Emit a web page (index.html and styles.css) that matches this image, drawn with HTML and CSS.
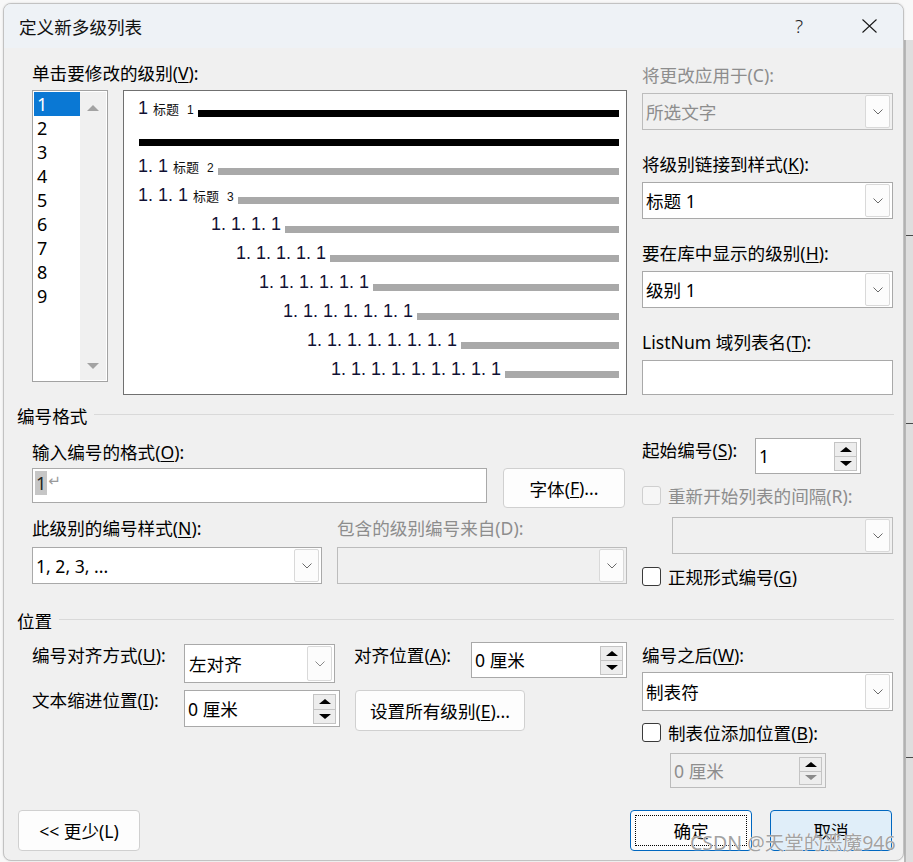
FILE: index.html
```html
<!DOCTYPE html>
<html lang="zh-CN">
<head>
<meta charset="utf-8">
<title>定义新多级列表</title>
<link rel="stylesheet" href="styles.css">
</head>
<body>
<div class="screen">
  <div class="window">
    <div class="titlebar">
      <span class="title">定义新多级列表</span>
      <span class="tb-help">?</span>
      <span class="tb-close"><svg width="15" height="14" viewBox="0 0 15 14"><path d="M0.5 0.5 L14.5 13.5 M14.5 0.5 L0.5 13.5" stroke="#1a1a1a" stroke-width="1.1" fill="none"/></svg></span>
    </div>

    <div class="content">
      <!-- Section A -->
      <div class="sec sec-a">
        <div class="col-left">
          <div class="label">单击要修改的级别(<u>V</u>):</div>
          <div class="level-row">
            <div class="levels">
              <div class="level-items">
                <div class="lv sel">1</div>
                <div class="lv">2</div>
                <div class="lv">3</div>
                <div class="lv">4</div>
                <div class="lv">5</div>
                <div class="lv">6</div>
                <div class="lv">7</div>
                <div class="lv">8</div>
                <div class="lv">9</div>
              </div>
              <div class="vscroll">
                <span class="arr-up"></span>
                <span class="arr-down"></span>
              </div>
            </div>
            <div class="preview">
              <div class="prow first"><span class="pn">1</span><span class="ps">标题<span class="psn">1</span></span><span class="bar black"></span></div>
              <div class="prow"><span class="bar black nogap"></span></div>
              <div class="prow"><span class="pn">1. 1</span><span class="ps">标题<span class="psn">2</span></span><span class="bar"></span></div>
              <div class="prow"><span class="pn">1. 1. 1</span><span class="ps">标题<span class="psn">3</span></span><span class="bar"></span></div>
              <div class="prow l5"><span class="pn">1. 1. 1. 1</span><span class="bar"></span></div>
              <div class="prow l6"><span class="pn">1. 1. 1. 1. 1</span><span class="bar"></span></div>
              <div class="prow l7"><span class="pn">1. 1. 1. 1. 1. 1</span><span class="bar"></span></div>
              <div class="prow l8"><span class="pn">1. 1. 1. 1. 1. 1. 1</span><span class="bar"></span></div>
              <div class="prow l9"><span class="pn">1. 1. 1. 1. 1. 1. 1. 1</span><span class="bar"></span></div>
              <div class="prow l10"><span class="pn">1. 1. 1. 1. 1. 1. 1. 1. 1</span><span class="bar"></span></div>
            </div>
          </div>
        </div>
        <div class="col-right stack-a">
          <div class="field">
            <div class="label dis">将更改应用于(C):</div>
            <div class="combo disabled"><span class="val">所选文字</span><span class="dd"><svg width="10" height="6" viewBox="0 0 10 6"><path d="M0.5 0.5 L5 5 L9.5 0.5" stroke="#6a6a6a" fill="none"/></svg></span></div>
          </div>
          <div class="field">
            <div class="label">将级别链接到样式(<u>K</u>):</div>
            <div class="combo"><span class="val">标题 1</span><span class="dd"><svg width="10" height="6" viewBox="0 0 10 6"><path d="M0.5 0.5 L5 5 L9.5 0.5" stroke="#6a6a6a" fill="none"/></svg></span></div>
          </div>
          <div class="field">
            <div class="label">要在库中显示的级别(<u>H</u>):</div>
            <div class="combo"><span class="val">级别 1</span><span class="dd"><svg width="10" height="6" viewBox="0 0 10 6"><path d="M0.5 0.5 L5 5 L9.5 0.5" stroke="#6a6a6a" fill="none"/></svg></span></div>
          </div>
          <div class="field">
            <div class="label">ListNum 域列表名(<u>T</u>):</div>
            <div class="textbox"></div>
          </div>
        </div>
      </div>

      <!-- Section B -->
      <div class="sechead head-b"><span>编号格式</span><span class="line"></span></div>
      <div class="sec sec-b">
        <div class="col-left pad-b">
          <div class="label">输入编号的格式(<u>O</u>):</div>
          <div class="fmt-row">
            <div class="textbox fmt"><span class="hl">1</span><span class="ret">↵</span></div>
            <div class="btn font-btn">字体(<u>F</u>)...</div>
          </div>
          <div class="pair">
            <div class="label">此级别的编号样式(<u>N</u>):</div>
            <div class="label dis">包含的级别编号来自(D):</div>
            <div class="combo"><span class="val">1, 2, 3, ...</span><span class="dd"><svg width="10" height="6" viewBox="0 0 10 6"><path d="M0.5 0.5 L5 5 L9.5 0.5" stroke="#6a6a6a" fill="none"/></svg></span></div>
            <div class="combo disabled"><span class="val"></span><span class="dd"><svg width="10" height="6" viewBox="0 0 10 6"><path d="M0.5 0.5 L5 5 L9.5 0.5" stroke="#6a6a6a" fill="none"/></svg></span></div>
          </div>
        </div>
        <div class="col-right">
          <div class="start-row">
            <span class="label start-label">起始编号(<u>S</u>):</span>
            <div class="spin start-spin"><span class="val">1</span><span class="btns"><span><i class="tu"></i></span><span><i class="td"></i></span></span></div>
          </div>
          <div class="cbrow dis r-cb1"><span class="cb off"></span><span>重新开始列表的间隔(R):</span></div>
          <div class="combo disabled restart"><span class="val"></span><span class="dd"><svg width="10" height="6" viewBox="0 0 10 6"><path d="M0.5 0.5 L5 5 L9.5 0.5" stroke="#6a6a6a" fill="none"/></svg></span></div>
          <div class="cbrow r-cb2"><span class="cb"></span><span>正规形式编号(<u>G</u>)</span></div>
        </div>
      </div>

      <!-- Section C -->
      <div class="sechead head-c"><span>位置</span><span class="line"></span></div>
      <div class="sec sec-c">
        <div class="col-left">
          <div class="pos-row1">
            <span class="label w152 top2">编号对齐方式(<u>U</u>):</span>
            <div class="combo align-combo top2"><span class="val">左对齐</span><span class="dd"><svg width="10" height="6" viewBox="0 0 10 6"><path d="M0.5 0.5 L5 5 L9.5 0.5" stroke="#8a8a8a" fill="none"/></svg></span></div>
            <span class="label w117 top2 ml19">对齐位置(<u>A</u>):</span>
            <div class="spin w156"><span class="val">0 厘米</span><span class="btns"><span><i class="tu"></i></span><span><i class="td"></i></span></span></div>
          </div>
          <div class="pos-row2">
            <span class="label w152">文本缩进位置(<u>I</u>):</span>
            <div class="spin w156 h37 top1"><span class="val">0 厘米</span><span class="btns"><span><i class="tu"></i></span><span><i class="td"></i></span></span></div>
            <div class="btn all-btn top1">设置所有级别(<u>E</u>)...</div>
          </div>
        </div>
        <div class="col-right pad-c">
          <div class="label">编号之后(<u>W</u>):</div>
          <div class="combo after-combo"><span class="val">制表符</span><span class="dd"><svg width="10" height="6" viewBox="0 0 10 6"><path d="M0.5 0.5 L5 5 L9.5 0.5" stroke="#6a6a6a" fill="none"/></svg></span></div>
          <div class="cbrow tab-cb"><span class="cb"></span><span>制表位添加位置(<u>B</u>):</span></div>
          <div class="spin disabled w156 tab-spin"><span class="val">0 厘米</span><span class="btns"><span><i class="tu"></i></span><span><i class="td light"></i></span></span></div>
        </div>
      </div>

      <!-- Bottom buttons -->
      <div class="bottom">
        <div class="btn less-btn">&lt;&lt; 更少(L)</div>
        <div class="spacer"></div>
        <div class="btn ok-btn"><span class="focus">确定</span></div>
        <div class="btn cancel-btn">取消</div>
      </div>
    </div>

    <div class="watermark">CSDN @天堂的恶魔946</div>
  </div>
  <div class="side">
    <div class="side-line sl1"></div>
    <div class="side-line sl2"></div>
    <div class="side-line sl3"></div>
  </div>
</div>
</body>
</html>
```

FILE: styles.css
```css
* { box-sizing: border-box; }
html, body { margin: 0; padding: 0; }
body {
  width: 913px;
  height: 862px;
  overflow: hidden;
  background: #f8f8f8;
  font-family: "Noto Sans", "Noto Sans CJK SC", sans-serif;
  font-size: 17.6px;
  color: #000;
}
u { text-decoration: underline; text-underline-offset: 2px; text-decoration-thickness: 1px; }

.screen { display: flex; height: 862px; }

.window {
  position: relative;
  flex: none;
  width: 901px;
  height: 858px;
  margin: 3px 0 0 3px;
  border: 1px solid #c2c2c2;
  border-radius: 8px;
  background: #f0f0f0;
  overflow: hidden;
  box-shadow: 0 0 2px rgba(0,0,0,0.15);
}

.side {
  flex: 1;
  margin-top: 40px;
  background: #dedede;
  border-left: 2px solid #b9b9b9;
  display: flex;
  flex-direction: column;
}
.side-line { height: 1px; background: #4a4a4a; }
.sl1 { margin-top: 195px; }
.sl2 { margin-top: 187px; }
.sl3 { margin-top: 333px; }

/* title bar */
.titlebar {
  display: flex;
  align-items: center;
  height: 44px;
  background: #eef2f6;
  padding: 0 11px 0 15px;
}
.title { flex: 1; font-size: 17.6px; color: #111; }
.tb-help { width: 30px; margin-right: 32px; text-align: center; font-size: 19px; color: #222; font-weight: 300; }
.tb-close { width: 46px; display: flex; justify-content: center; }

/* content */
.content { padding: 14px 9px 0 28px; }
.sec { display: grid; grid-template-columns: 595px 251px; column-gap: 15px; }

.label { height: 22px; line-height: 22px; white-space: nowrap; }
.dis { color: #8d8d8d; }

/* level list */
.level-row { display: flex; gap: 15px; margin-top: 6px; align-items: flex-start; }
.levels {
  width: 76px;
  height: 292px;
  border: 1px solid #a2a2a2;
  background: #fff;
  padding: 1px;
  display: flex;
}
.level-items { width: 46px; }
.lv { height: 24px; line-height: 24px; padding-left: 3px; font-size: 18px; }
.lv.sel { background: #0a78d4; color: #fff; }
.vscroll {
  width: 26px;
  background: #f0f0f0;
  display: flex;
  flex-direction: column;
  justify-content: space-between;
  align-items: center;
  padding: 13px 0 11px;
}
.arr-up { width: 0; height: 0; border-left: 6px solid transparent; border-right: 6px solid transparent; border-bottom: 6px solid #a3a3a3; }
.arr-down { width: 0; height: 0; border-left: 6px solid transparent; border-right: 6px solid transparent; border-top: 6px solid #a3a3a3; }

/* preview */
.preview {
  width: 504px;
  height: 305px;
  border: 1px solid #707070;
  background: #fff;
}
.prow {
  display: flex;
  align-items: flex-end;
  height: 29px;
  padding: 0 7px 0 14px;
}
.prow.first { height: 26px; }
.pn {
  font-family: "Liberation Sans", Arial, sans-serif;
  font-size: 18px;
  line-height: 17px;
  color: #111133;
  white-space: pre;
}
.ps {
  font-family: "Noto Sans CJK SC", sans-serif;
  font-size: 13px;
  line-height: 14px;
  margin-left: 5px;
  white-space: pre;
  color: #111;
}
.psn { font-family: "Liberation Sans", Arial, sans-serif; margin-left: 8px; font-size: 12px; }
.bar { flex: 1; height: 7px; background: #a9a9a9; margin-left: 4px; }
.bar.black { background: #000; }
.bar.nogap { margin-left: 1px; }
.l5 { padding-left: 87px; }
.l6 { padding-left: 112px; }
.l7 { padding-left: 135px; }
.l8 { padding-left: 159px; }
.l9 { padding-left: 183px; }
.l10 { padding-left: 207px; }

/* right column section A */
.stack-a { display: flex; flex-direction: column; gap: 23px; padding-top: 2px; }
.field { display: flex; flex-direction: column; gap: 7px; }

/* combo */
.combo {
  display: flex;
  align-items: center;
  height: 37px;
  border: 1px solid #a9a9a9;
  background: #fff;
}
.combo .val { flex: 1; padding-left: 3px; line-height: 22px; white-space: nowrap; overflow: hidden; }
.combo .dd {
  align-self: stretch;
  width: 25px;
  margin: 1px 2px 1px 0;
  border: 1px solid #d9d9d9;
  border-radius: 2px;
  background: #fcfcfc;
  display: flex;
  align-items: center;
  justify-content: center;
}
.combo.disabled { background: #f0f0f0; border-color: #bcbcbc; }
.combo.disabled .val { color: #8d8d8d; }

.textbox { height: 35px; border: 1px solid #a9a9a9; background: #fff; }

/* spin */
.spin {
  display: flex;
  align-items: center;
  height: 36px;
  border: 1px solid #a9a9a9;
  background: #fff;
}
.spin .val { flex: 1; padding-left: 3px; line-height: 22px; white-space: nowrap; }
.spin .btns {
  align-self: stretch;
  display: flex;
  flex-direction: column;
  width: 23px;
  margin: 3px 3px 2px 0;
}
.spin .btns > span {
  flex: 1;
  border: 1px solid #c4c4c4;
  background: #ededed;
  display: flex;
  align-items: center;
  justify-content: center;
}
.spin .btns > span + span { border-top: none; }
.tu { display: block; width: 0; height: 0; border-left: 6px solid transparent; border-right: 6px solid transparent; border-bottom: 5px solid #000; }
.td { display: block; width: 0; height: 0; border-left: 6px solid transparent; border-right: 6px solid transparent; border-top: 5px solid #000; }
.td.light { border-top-color: #8a8a8a; }
.spin.disabled { background: #f0f0f0; border-color: #bcbcbc; }
.spin.disabled .val { color: #8d8d8d; }

/* checkbox */
.cbrow { display: flex; align-items: center; gap: 7px; height: 22px; white-space: nowrap; }
.cb {
  flex: none;
  width: 19px;
  height: 19px;
  border: 1px solid #3a3a3a;
  border-radius: 3px;
  background: #fff;
}
.cb.off { border-color: #cfcfcf; background: #f6f6f6; }

/* buttons */
.btn {
  display: flex;
  align-items: center;
  justify-content: center;
  height: 40px;
  border: 1px solid #d0d0d0;
  border-radius: 4px;
  background: #fdfdfd;
  white-space: nowrap;
}

/* section headers */
.sechead {
  display: flex;
  align-items: center;
  height: 22px;
  margin-left: -15px;
  line-height: 22px;
}
.sechead .line { flex: 1; height: 1px; background: #d9d9d9; margin-left: 7px; margin-bottom: 3px; }
.head-b { margin-top: 10px; }
.head-c { margin-top: 23px; }

/* section B */
.sec-b { margin-top: 11px; }
.pad-b { padding-top: 3px; }
.fmt-row { display: flex; gap: 16px; margin-top: 5px; align-items: flex-start; }
.fmt { width: 455px; display: flex; align-items: flex-start; padding: 2px 0 0 2px; }
.hl { display: inline-block; height: 24px; line-height: 24px; background: #c6c6c6; color: #222; padding: 0 1px; font-size: 18px; }
.ret { font-family: "DejaVu Sans", sans-serif; font-size: 15px; color: #9a9a9a; line-height: 20px; margin-left: 1px; }
.font-btn { width: 122px; }
.pair {
  display: grid;
  grid-template-columns: 290px 290px;
  column-gap: 15px;
  row-gap: 8px;
  margin-top: 9px;
}
.start-row { display: flex; align-items: flex-start; }
.start-label { width: 113px; margin-top: 1px; }
.start-spin { width: 106px; }
.r-cb1 { margin-top: 10px; }
.restart { margin-top: 11px; margin-left: 30px; }
.r-cb2 { margin-top: 11px; }

/* section C */
.sec-c { margin-top: 10px; }
.pos-row1 { display: flex; align-items: flex-start; }
.pos-row2 { display: flex; align-items: flex-start; margin-top: 6px; }
.w152 { width: 152px; flex: none; }
.w117 { width: 117px; flex: none; }
.w156 { width: 156px; flex: none; }
.ml19 { margin-left: 19px; }
.top2 { margin-top: 2px; }
.top1 { margin-top: 1px; }
.h37 { height: 37px; }
.align-combo { width: 151px; height: 39px; }
.align-combo .val { padding-left: 4px; }
.all-btn { width: 170px; height: 41px; margin-left: 15px; }
.pad-c { padding-top: 2px; }
.after-combo { height: 39px; margin-top: 6px; }
.tab-cb { margin-top: 10px; }
.tab-spin { height: 35px; margin-top: 10px; margin-left: 28px; }

/* bottom */
.bottom { display: flex; margin: 22px 2px 0 -14px; }
.spacer { flex: 1; }
.less-btn { width: 122px; height: 41px; }
.ok-btn { width: 122px; height: 41px; border-color: #0067c0; padding: 4px; }
.ok-btn .focus {
  flex: 1;
  align-self: stretch;
  display: flex;
  align-items: center;
  justify-content: center;
  border: 1px dotted #000;
}
.cancel-btn { width: 122px; height: 41px; margin-left: 18px; background: #e0eef9; border-color: #0067c0; }

.watermark {
  position: absolute;
  left: 686px;
  top: 828px;
  font-size: 19.5px;
  line-height: 22px;
  color: #a2a2a2;
  text-shadow: 0 0 1px #fff, 0 0 1px #fff;
  white-space: nowrap;
}
```
